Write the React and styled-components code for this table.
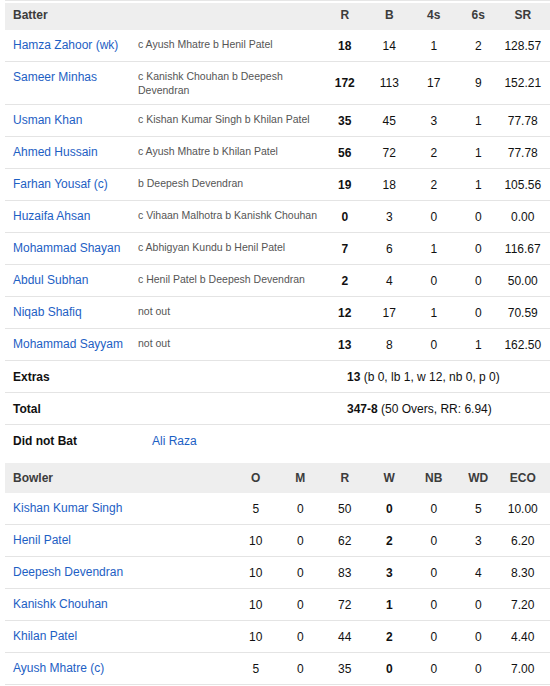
import React from "react";
import styled, { createGlobalStyle } from "styled-components";

const Global = createGlobalStyle`
  html, body { margin: 0; padding: 0; background: #fff; }
  body { font-family: "Liberation Sans", Arial, sans-serif; }
`;

const Page = styled.div`
  width: 545px;
  margin-left: 5px;
  border-top: 1px solid #e6e6e6;
  padding-top: 2px;
`;

const BAT_COLS = "125px 192.5px repeat(5, 44.5px)";
const BOWL_COLS = "228.5px repeat(7, 44.5px)";

const HeadRow = styled.div`
  display: grid;
  grid-template-columns: ${(p) => p.$cols};
  align-items: center;
  height: ${(p) => p.$h}px;
  padding-right: 5px;
  padding-bottom: ${(p) => p.$pb || 0}px;
  box-sizing: border-box;
  background: #eeeeee;
  margin-top: ${(p) => p.$mt || 0}px;
`;

const HeadCell = styled.div`
  font-size: 12px;
  line-height: 14px;
  font-weight: bold;
  color: #3c3c3c;
  text-align: ${(p) => (p.$left ? "left" : "center")};
  padding-left: ${(p) => (p.$left ? "8px" : "0")};
  grid-column: ${(p) => p.$span || "auto"};
`;

const Row = styled.div`
  display: grid;
  grid-template-columns: ${(p) => p.$cols};
  align-items: center;
  min-height: 31px;
  padding-right: 5px;
  border-bottom: ${(p) => (p.$noLine ? "none" : "1px solid #e4e4e4")};
`;

const Name = styled.div`
  align-self: start;
  padding: 8px 0 0 8px;
  font-size: 12px;
  line-height: 14px;
  color: #1d60c4;
`;

const Label = styled.div`
  padding-left: 8px;
  font-size: 12px;
  line-height: 14px;
  font-weight: bold;
  color: #111;
`;

const Dismissal = styled.div`
  align-self: start;
  padding: 7px 4px 7px 8px;
  font-size: 10.5px;
  line-height: 14px;
  color: #555;
`;

const Num = styled.div`
  text-align: center;
  font-size: 12px;
  line-height: 14px;
  color: #111;
  font-weight: ${(p) => (p.$bold ? "bold" : "normal")};
`;

const Summary = styled.div`
  grid-column: 3 / 8;
  padding-left: 24.5px;
  font-size: 12px;
  line-height: 14px;
  color: #111;
  white-space: nowrap;
  b { font-weight: bold; }
`;

const DnbValue = styled.div`
  grid-column: 2 / 8;
  padding-left: 22px;
  font-size: 12px;
  line-height: 14px;
  color: #1d60c4;
`;

const batters = [
  ["Hamza Zahoor (wk)", "c Ayush Mhatre b Henil Patel", 18, 14, 1, 2, "128.57"],
  ["Sameer Minhas", "c Kanishk Chouhan b Deepesh Devendran", 172, 113, 17, 9, "152.21"],
  ["Usman Khan", "c Kishan Kumar Singh b Khilan Patel", 35, 45, 3, 1, "77.78"],
  ["Ahmed Hussain", "c Ayush Mhatre b Khilan Patel", 56, 72, 2, 1, "77.78"],
  ["Farhan Yousaf (c)", "b Deepesh Devendran", 19, 18, 2, 1, "105.56"],
  ["Huzaifa Ahsan", "c Vihaan Malhotra b Kanishk Chouhan", 0, 3, 0, 0, "0.00"],
  ["Mohammad Shayan", "c Abhigyan Kundu b Henil Patel", 7, 6, 1, 0, "116.67"],
  ["Abdul Subhan", "c Henil Patel b Deepesh Devendran", 2, 4, 0, 0, "50.00"],
  ["Niqab Shafiq", "not out", 12, 17, 1, 0, "70.59"],
  ["Mohammad Sayyam", "not out", 13, 8, 0, 1, "162.50"],
];

const bowlers = [
  ["Kishan Kumar Singh", 5, 0, 50, 0, 0, 5, "10.00"],
  ["Henil Patel", 10, 0, 62, 2, 0, 3, "6.20"],
  ["Deepesh Devendran", 10, 0, 83, 3, 0, 4, "8.30"],
  ["Kanishk Chouhan", 10, 0, 72, 1, 0, 0, "7.20"],
  ["Khilan Patel", 10, 0, 44, 2, 0, 0, "4.40"],
  ["Ayush Mhatre (c)", 5, 0, 35, 0, 0, 0, "7.00"],
];

export default function App() {
  return (
    <>
      <Global />
      <Page>
        <HeadRow $cols={BAT_COLS} $h={27} $pb={4}>
          <HeadCell $left $span="1 / 3">Batter</HeadCell>
          {["R", "B", "4s", "6s", "SR"].map((h) => (
            <HeadCell key={h}>{h}</HeadCell>
          ))}
        </HeadRow>
        {batters.map((b) => (
          <Row $cols={BAT_COLS} key={b[0]}>
            <Name>{b[0]}</Name>
            <Dismissal>{b[1]}</Dismissal>
            <Num $bold>{b[2]}</Num>
            <Num>{b[3]}</Num>
            <Num>{b[4]}</Num>
            <Num>{b[5]}</Num>
            <Num>{b[6]}</Num>
          </Row>
        ))}
        <Row $cols={BAT_COLS}>
          <Label>Extras</Label>
          <Summary>
            <b>13</b> (b 0, lb 1, w 12, nb 0, p 0)
          </Summary>
        </Row>
        <Row $cols={BAT_COLS}>
          <Label>Total</Label>
          <Summary>
            <b>347-8</b> (50 Overs, RR: 6.94)
          </Summary>
        </Row>
        <Row $cols={BAT_COLS} $noLine>
          <Label>Did not Bat</Label>
          <DnbValue>Ali Raza</DnbValue>
        </Row>

        <HeadRow $cols={BOWL_COLS} $h={30} $mt={7}>
          <HeadCell $left>Bowler</HeadCell>
          {["O", "M", "R", "W", "NB", "WD", "ECO"].map((h) => (
            <HeadCell key={h}>{h}</HeadCell>
          ))}
        </HeadRow>
        {bowlers.map((b) => (
          <Row $cols={BOWL_COLS} key={b[0]}>
            <Name>{b[0]}</Name>
            <Num>{b[1]}</Num>
            <Num>{b[2]}</Num>
            <Num>{b[3]}</Num>
            <Num $bold>{b[4]}</Num>
            <Num>{b[5]}</Num>
            <Num>{b[6]}</Num>
            <Num>{b[7]}</Num>
          </Row>
        ))}
      </Page>
    </>
  );
}
